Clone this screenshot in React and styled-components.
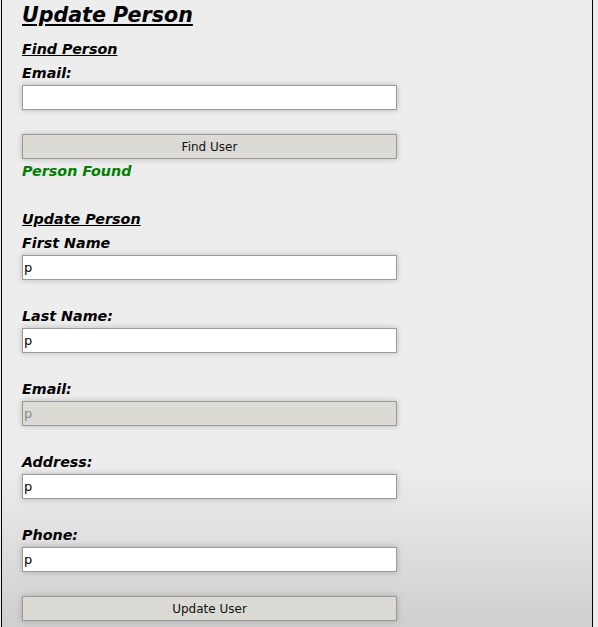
import React, { useState } from 'react'
import styled, { createGlobalStyle } from 'styled-components'

const GlobalStyle = createGlobalStyle`
  html, body {
    margin: 0;
    padding: 0;
    background: #ededed;
  }
  body {
    font-family: "DejaVu Sans", Verdana, sans-serif;
  }
`

const Page = styled.div`
  box-sizing: border-box;
  width: 592px;
  min-height: 627px;
  margin-left: 1px;
  border-left: 1px solid #000;
  border-right: 1px solid #000;
  padding: 3px 20px 7px 20px;
  background: linear-gradient(to bottom, #ededed 0%, #ededed 74%, #cfcfcf 100%);
  display: flex;
  flex-direction: column;
`

const Title = styled.h2`
  margin: 0 0 13px 0;
  font-size: 20.6px;
  line-height: 25px;
  font-weight: bold;
  font-style: italic;
  text-decoration: underline;
  color: #000;
`

const Section = styled.h4`
  margin: 0 0 6px 0;
  font-size: 14.3px;
  line-height: 17px;
  font-weight: bold;
  font-style: italic;
  text-decoration: underline;
  color: #000;
`

const Label = styled.label`
  display: block;
  padding-top: 1px;
  font-size: 14.3px;
  line-height: 17px;
  font-weight: bold;
  font-style: italic;
  color: #000;
  margin-bottom: 3px;
`

const Field = styled.div`
  display: flex;
  flex-direction: column;
  margin-bottom: ${p => p.$gap || 27}px;
`

const Input = styled.input`
  box-sizing: border-box;
  width: 375px;
  height: 25px;
  margin: 0;
  padding: 0 1px;
  border: 1px solid #9a9a9a;
  background: ${p => (p.disabled ? '#dcdad5' : '#fff')};
  color: ${p => (p.disabled ? '#8c8c8c' : '#000')};
  font-family: "DejaVu Sans", Verdana, sans-serif;
  font-size: 13px;
  box-shadow: 0 0 6px rgba(0, 0, 0, 0.22);
  outline: none;
`

const Button = styled.button`
  box-sizing: border-box;
  width: 375px;
  height: 25px;
  margin: 0;
  padding: 0;
  border: 1px solid #9a9a9a;
  background: #dcdad5;
  color: #111;
  font-family: "DejaVu Sans", Verdana, sans-serif;
  font-size: 12px;
  box-shadow: 0 0 6px rgba(0, 0, 0, 0.22);
  cursor: pointer;
`

const Status = styled.p`
  margin: 4px 0 31px 0;
  font-size: 14.3px;
  line-height: 17px;
  font-weight: bold;
  font-style: italic;
  color: #008000;
`

const Block = styled.div`
  display: flex;
  flex-direction: column;
`

export default function App() {
  const [email, setEmail] = useState('')
  const [person, setPerson] = useState({
    firstName: 'p',
    lastName: 'p',
    email: 'p',
    address: 'p',
    phone: 'p',
  })

  const onChange = (property, value) => {
    setPerson(prev => ({ ...prev, [property]: value }))
  }

  return (
    <>
      <GlobalStyle />
      <Page>
        <Title>Update Person</Title>
        <Block>
          <Section>Find Person</Section>
          <Field $gap={24}>
            <Label>Email:</Label>
            <Input value={email} onChange={e => setEmail(e.target.value)} />
          </Field>
          <Button>Find User</Button>
          <Status>Person Found</Status>
        </Block>
        <Block>
          <Section>Update Person</Section>
          <Field>
            <Label>First Name</Label>
            <Input value={person.firstName} onChange={e => onChange('firstName', e.target.value)} />
          </Field>
          <Field>
            <Label>Last Name:</Label>
            <Input value={person.lastName} onChange={e => onChange('lastName', e.target.value)} />
          </Field>
          <Field>
            <Label>Email:</Label>
            <Input value={person.email} disabled readOnly />
          </Field>
          <Field>
            <Label>Address:</Label>
            <Input value={person.address} onChange={e => onChange('address', e.target.value)} />
          </Field>
          <Field $gap={24}>
            <Label>Phone:</Label>
            <Input value={person.phone} onChange={e => onChange('phone', e.target.value)} />
          </Field>
          <Button>Update User</Button>
        </Block>
      </Page>
    </>
  )
}
